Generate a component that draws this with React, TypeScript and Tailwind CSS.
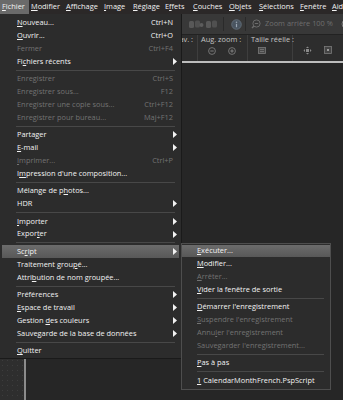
import clsx from "clsx";

type Entry =
  | { label: string; shortcut?: string; arrow?: boolean; disabled?: boolean; active?: boolean }
  | "sep";

const fileMenu: Entry[] = [
  { label: "&Nouveau...", shortcut: "Ctrl+N" },
  { label: "&Ouvrir...", shortcut: "Ctrl+O" },
  { label: "Fermer", shortcut: "Ctrl+F4", disabled: true },
  { label: "Fi&chiers récents", arrow: true },
  "sep",
  { label: "Enregistrer", shortcut: "Ctrl+S", disabled: true },
  { label: "Enregistrer sous...", shortcut: "F12", disabled: true },
  { label: "Enregistrer une copie sous...", shortcut: "Ctrl+F12", disabled: true },
  { label: "Enregistrer pour bureau...", shortcut: "Maj+F12", disabled: true },
  "sep",
  { label: "Partager", arrow: true },
  { label: "&E-mail", arrow: true },
  { label: "&Imprimer...", shortcut: "Ctrl+P", disabled: true },
  { label: "I&mpression d'une composition..." },
  "sep",
  { label: "Mélange de p&hotos..." },
  { label: "HDR", arrow: true },
  "sep",
  { label: "&Importer", arrow: true },
  { label: "Expor&ter", arrow: true },
  "sep",
  { label: "Sc&ript", arrow: true, active: true },
  { label: "Traitement grou&pé..." },
  { label: "Attri&bution de nom groupée..." },
  "sep",
  { label: "Préférences", arrow: true },
  { label: "&Espace de travail", arrow: true },
  { label: "Gestion &des couleurs", arrow: true },
  { label: "Sauvegarde de la base de données", arrow: true },
  "sep",
  { label: "&Quitter" },
];

const scriptMenu: Entry[] = [
  { label: "&Exécuter...", active: true },
  { label: "&Modifier..." },
  { label: "&Arrêter...", disabled: true },
  { label: "&Vider la fenêtre de sortie" },
  "sep",
  { label: "&Démarrer l'enregistrement" },
  { label: "&Suspendre l'enregistrement", disabled: true },
  { label: "Annu&ler l'enregistrement", disabled: true },
  { label: "Sauve&garder l'enregistrement...", disabled: true },
  "sep",
  { label: "&Pas à pas" },
  "sep",
  { label: "&1 CalendarMonthFrench.PspScript" },
];

const menuBar = [
  { label: "&Fichier", w: "w-[29px]", open: true },
  { label: "&Modifier", w: "w-[35px]" },
  { label: "&Affichage", w: "w-[38px]" },
  { label: "&Image", w: "w-[29px]" },
  { label: "&Réglage", w: "w-[32px]" },
  { label: "E&ffets", w: "w-[28px]" },
  { label: "&Couches", w: "w-[36px]" },
  { label: "&Objets", w: "w-[30px]" },
  { label: "&Sélections", w: "w-[41px]" },
  { label: "&Fenêtre", w: "w-[32px]" },
  { label: "&Aide", w: "w-[20px]" },
];

const Label = ({ text }: { text: string }) => {
  const i = text.indexOf("&");
  if (i < 0) return <>{text}</>;
  return (
    <>
      {text.slice(0, i)}
      <span className="underline underline-offset-[1px]">{text[i + 1]}</span>
      {text.slice(i + 2)}
    </>
  );
};

const Arrow = () => (
  <svg width="4" height="7" viewBox="0 0 4 7" className="mr-[2px] shrink-0">
    <path d="M0 0 L4 3.5 L0 7 Z" fill="#f2f2f2" />
  </svg>
);

const MenuList = ({ items, sub }: { items: Entry[]; sub?: boolean }) => (
  <>
    {items.map((e, i) =>
      e === "sep" ? (
        <div key={i} className="h-[4.8px] flex items-center">
          <div className={clsx("h-px flex-1 bg-[#484848]", sub ? "ml-[15px] mr-[6px]" : "ml-[16px] mr-[6px]")} />
        </div>
      ) : (
        <div
          key={i}
          className={clsx(
            "flex items-center h-[12.8px] whitespace-nowrap pl-[15px]",
            !sub && "mx-[2px]",
            e.active && "bg-linear-to-b from-[#6c6c6c] to-[#585858]",
            e.disabled ? "text-[#737373]" : "text-[#f2f2f2]"
          )}
        >
          <span className="flex-1">
            <Label text={e.label} />
          </span>
          {e.shortcut && <span className="pr-[6px]">{e.shortcut}</span>}
          {e.arrow && <Arrow />}
        </div>
      )
    )}
  </>
);

const CircleIcon = ({ plus }: { plus?: boolean }) => (
  <svg width="8" height="8" viewBox="0 0 8 8">
    <circle cx="4" cy="4" r="3.4" fill="none" stroke="#7c7c7c" strokeWidth="0.9" />
    <path d="M2.3 4 H5.7" stroke="#8a8a8a" strokeWidth="0.9" />
    {plus && <path d="M4 2.3 V5.7" stroke="#8a8a8a" strokeWidth="0.9" />}
  </svg>
);

export default function App() {
  return (
    <div className="relative w-[343px] h-[400px] overflow-hidden bg-[#282828] font-['Open_Sans','Noto_Sans',sans-serif] text-[7.4px] leading-none flex flex-col">
      {/* menu bar */}
      <div className="h-[14px] shrink-0 flex bg-[#2b2828] text-[#f2f2f2]">
        {menuBar.map((m) => (
          <div
            key={m.label}
            className={clsx("shrink-0 h-full flex items-center pl-[2px] whitespace-nowrap", m.w, m.open && "bg-[#6a6a6a]")}
          >
            <Label text={m.label} />
          </div>
        ))}
      </div>

      {/* main toolbar */}
      <div className="h-[21px] shrink-0 flex items-center bg-[#383838] border-b border-[#222] text-[#6f6f6f]">
        <div className="w-[188px] shrink-0" />
        <svg width="16" height="9" viewBox="0 0 16 9" className="shrink-0">
          <rect x="1" y="1" width="5" height="7" rx="1.5" fill="#585858" />
          <rect x="7" y="0.5" width="5" height="7" rx="1.5" fill="#505050" />
          <circle cx="13.5" cy="5" r="2" fill="#5c5c5c" />
        </svg>
        <svg width="14" height="9" viewBox="0 0 14 9" className="ml-[1px] shrink-0">
          <rect x="1" y="1" width="5" height="7" rx="1.5" fill="#585858" />
          <rect x="7" y="0.5" width="5" height="7" rx="1.5" fill="#505050" />
        </svg>
        <div className="ml-[4px] w-px h-[14px] bg-[#2a2a2a] shrink-0" />
        <svg width="11" height="11" viewBox="0 0 11 11" className="ml-[7px] shrink-0">
          <circle cx="5.5" cy="5.5" r="4.8" fill="#4a5561" stroke="#67737f" strokeWidth="0.8" />
          <circle cx="5.5" cy="3.2" r="0.8" fill="#9aa6b2" />
          <path d="M5.5 4.8 V8.2" stroke="#9aa6b2" strokeWidth="1.2" />
        </svg>
        <div className="ml-[3px] w-px h-[14px] bg-[#2a2a2a] shrink-0" />
        <svg width="10" height="10" viewBox="0 0 10 10" className="ml-[5px] shrink-0">
          <circle cx="5.5" cy="4.5" r="3.6" fill="none" stroke="#6c6c6c" strokeWidth="1" />
          <path d="M3.8 4.5 H7.2" stroke="#6c6c6c" strokeWidth="1" />
          <path d="M3 7 L1 9" stroke="#6c6c6c" strokeWidth="1.4" />
        </svg>
        <span className="ml-[4px] whitespace-nowrap">Zoom arrière 100 %</span>
        <svg width="10" height="10" viewBox="0 0 10 10" className="ml-[8px] shrink-0">
          <circle cx="5" cy="5" r="4" fill="none" stroke="#7a7a7a" strokeWidth="1" />
          <path d="M3 5 H7 M5 3 V7" stroke="#7a7a7a" strokeWidth="1" />
        </svg>
      </div>

      {/* tool options palette */}
      <div className="h-[26px] shrink-0 flex bg-[#2d2d2d] text-[#c4c4c4]">
        <div className="w-[198px] shrink-0 flex justify-end pt-[1px] pr-[4px] border-r border-[#3e3e3e]">
          <span className="whitespace-nowrap">av. :</span>
        </div>
        <div className="w-[50px] shrink-0 flex flex-col pt-[1px] pl-[3px] border-r border-[#3e3e3e]">
          <span className="whitespace-nowrap">Aug. zoom :</span>
          <div className="flex mt-[4px] pl-[7px] gap-[12px]">
            <CircleIcon />
            <CircleIcon plus />
          </div>
        </div>
        <div className="w-[45px] shrink-0 flex flex-col pt-[1px] pl-[3px] border-r border-[#3e3e3e]">
          <span className="whitespace-nowrap">Taille réelle :</span>
          <div className="flex mt-[4px] pl-[7px]">
            <svg width="8" height="7" viewBox="0 0 8 7">
              <rect x="0.5" y="0.5" width="7" height="6" fill="#4a4a4a" stroke="#7a7a7a" strokeWidth="0.8" />
              <path d="M2 2.5 H6 M2 4.5 H6" stroke="#8a8a8a" strokeWidth="0.6" />
            </svg>
          </div>
        </div>
        <div className="flex-1 flex items-start pt-[11px] pl-[10px] gap-[12px]">
          <svg width="9" height="9" viewBox="0 0 9 9">
            <path d="M4.5 0.5 L6 2 H3 Z M4.5 8.5 L6 7 H3 Z M0.5 4.5 L2 3 V6 Z M8.5 4.5 L7 3 V6 Z" fill="#8a8a8a" />
            <rect x="3" y="3" width="3" height="3" fill="#8a8a8a" />
          </svg>
          <svg width="8" height="8" viewBox="0 0 8 8">
            <rect x="0.5" y="0.5" width="7" height="7" fill="#444" stroke="#7a7a7a" strokeWidth="0.8" />
            <rect x="3" y="3" width="2" height="2" fill="#9a9a9a" />
          </svg>
        </div>
      </div>
      <div className="h-[2px] shrink-0 bg-[#bdbdbd]" />

      {/* workspace */}
      <div className="flex-1 flex">
        <div className="w-[24px] shrink-0 bg-[#2e2e2e] bg-[radial-gradient(circle,#3d3d3d_0.8px,transparent_1px)] bg-size-[5px_5px]" />
        <div className="w-[2px] shrink-0 bg-[#8b8b8b]" />
        <div className="flex-1 bg-[#262626]" />
      </div>

      {/* Fichier dropdown */}
      <div className="absolute left-0 top-[14px] w-[182px] bg-[#2c2c2c] border-r border-b border-[#1a1a1a] pt-[2.6px] pb-[0.6px]">
        <MenuList items={fileMenu} />
      </div>

      {/* Script submenu */}
      <div className="absolute left-[181px] top-[243px] w-[150px] bg-[#2c2c2c] border border-[#4e4e4e] pt-[0.6px] pb-[1.6px]">
        <MenuList items={scriptMenu} sub />
      </div>
    </div>
  );
}
